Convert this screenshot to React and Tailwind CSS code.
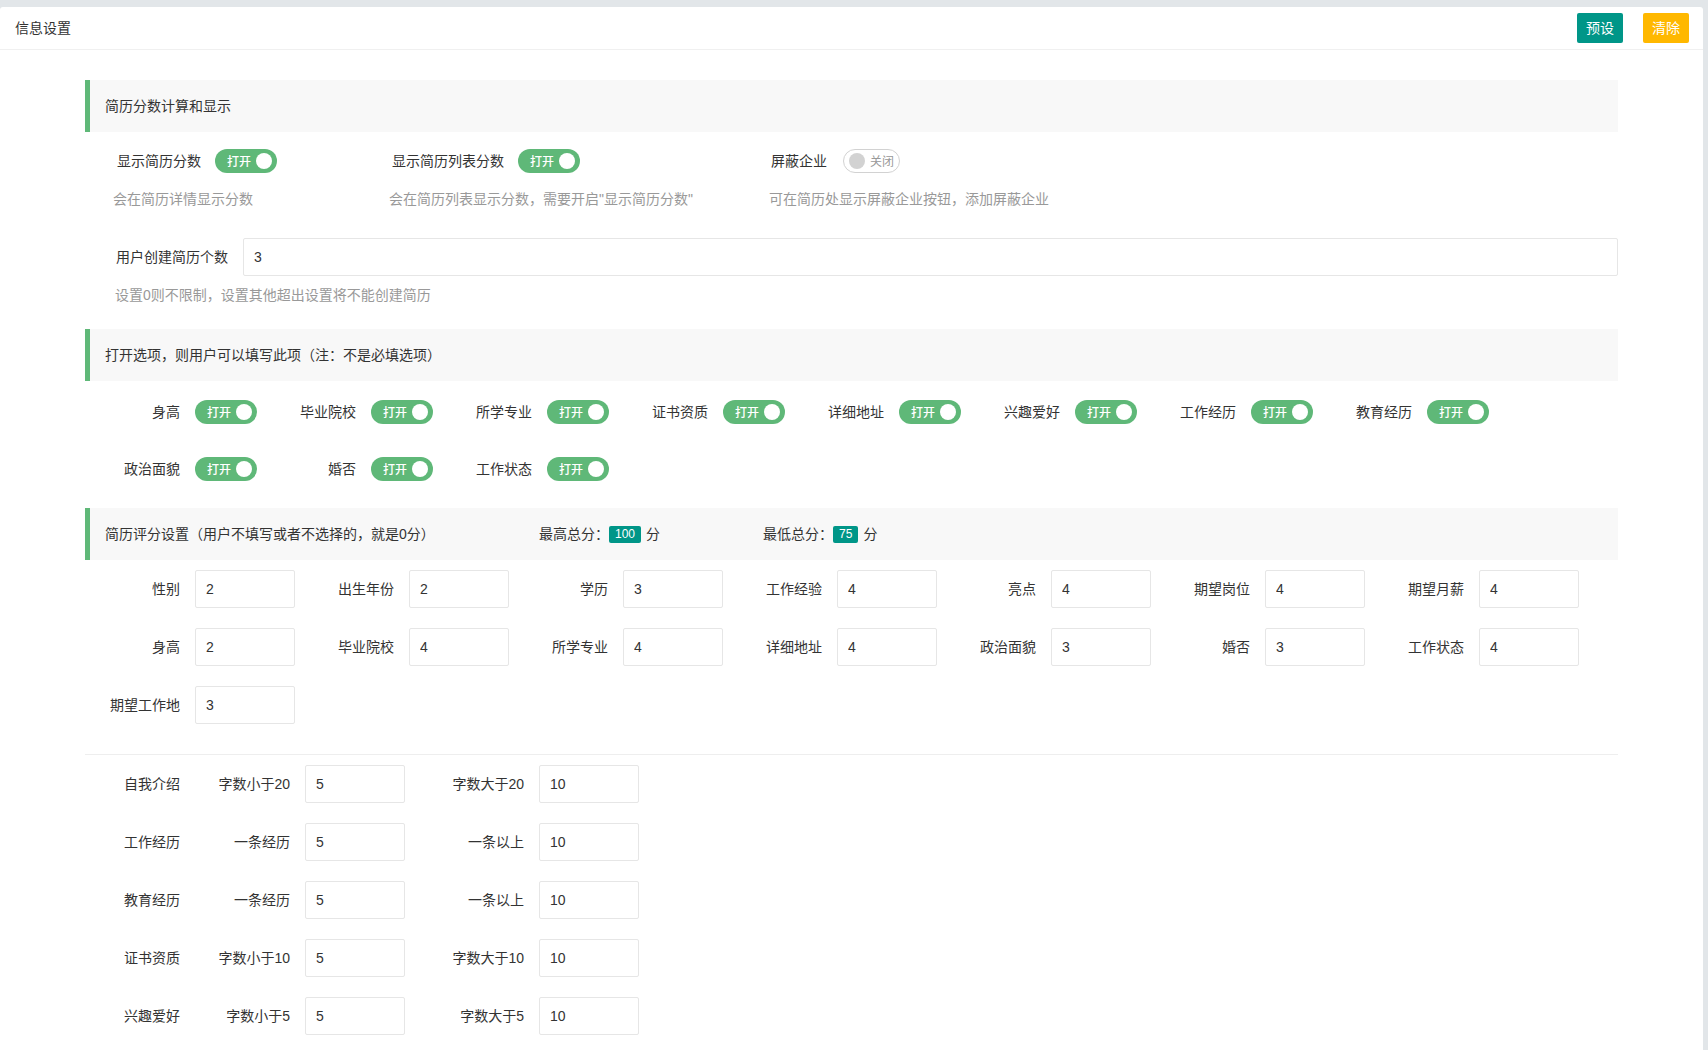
import React from 'react';

function Toggle({ on = true }) {
  if (on) {
    return (
      <span className="relative block h-[24px] w-[62px] shrink-0 rounded-full bg-[#5FB878] pl-[12px] text-[12px] font-medium leading-[26px] text-white">
        打开
        <span className="absolute right-[5px] top-[4px] h-[16px] w-[16px] rounded-full bg-white" />
      </span>
    );
  }
  return (
    <span className="relative box-border block h-[24px] w-[57px] shrink-0 rounded-full border border-[#d2d2d2] bg-white pl-[26px] text-[12px] leading-[24px] text-[#999]">
      关闭
      <span className="absolute left-[5px] top-[3px] h-[16px] w-[16px] rounded-full bg-[#d2d2d2]" />
    </span>
  );
}

function Quote({ children, className = '' }) {
  return (
    <div className={`flex items-center border-l-[5px] border-[#5FB878] bg-[#f8f8f8] pl-[15px] text-[14px] text-[#333] ${className}`}>
      {children}
    </div>
  );
}

function Field({ value }) {
  return (
    <input
      readOnly
      value={value}
      className="box-border h-[38px] w-[100px] shrink-0 rounded-[2px] border border-[#e6e6e6] bg-white px-[10px] text-[14px] text-[#333] outline-none"
    />
  );
}

function Label({ children }) {
  return <div className="w-[110px] shrink-0 pr-[15px] text-right leading-[38px] text-[#333]">{children}</div>;
}

const toggleRow1 = ['身高', '毕业院校', '所学专业', '证书资质', '详细地址', '兴趣爱好', '工作经历', '教育经历'];
const toggleRow2 = ['政治面貌', '婚否', '工作状态'];

const scoreRow1 = [
  ['性别', '2'],
  ['出生年份', '2'],
  ['学历', '3'],
  ['工作经验', '4'],
  ['亮点', '4'],
  ['期望岗位', '4'],
  ['期望月薪', '4'],
];
const scoreRow2 = [
  ['身高', '2'],
  ['毕业院校', '4'],
  ['所学专业', '4'],
  ['详细地址', '4'],
  ['政治面貌', '3'],
  ['婚否', '3'],
  ['工作状态', '4'],
];
const scoreRow3 = [['期望工作地', '3']];

const extraRows = [
  ['自我介绍', '字数小于20', '5', '字数大于20', '10'],
  ['工作经历', '一条经历', '5', '一条以上', '10'],
  ['教育经历', '一条经历', '5', '一条以上', '10'],
  ['证书资质', '字数小于10', '5', '字数大于10', '10'],
  ['兴趣爱好', '字数小于5', '5', '字数大于5', '10'],
];

function ToggleRow({ items, className = '' }) {
  return (
    <div className={`flex h-[38px] items-center ${className}`}>
      {items.map((t) => (
        <div key={t} className="flex w-[176px] shrink-0 items-center">
          <Label>{t}</Label>
          <Toggle />
        </div>
      ))}
    </div>
  );
}

function ScoreRow({ items, className = '' }) {
  return (
    <div className={`flex items-center ${className}`}>
      {items.map(([l, v]) => (
        <div key={l} className="flex w-[214px] shrink-0 items-center">
          <Label>{l}</Label>
          <Field value={v} />
        </div>
      ))}
    </div>
  );
}

export default function App() {
  return (
    <div className="min-h-screen bg-[#e2e6e9] pr-[5px] pt-[7px] font-['Liberation_Sans','Noto_Sans_CJK_SC',sans-serif] text-[14px] text-[#333]">
      <div className="min-h-[1100px] rounded-t-[3px] bg-white pb-[40px]">
        {/* header */}
        <div className="box-border flex h-[43px] items-center justify-between border-b border-[#f0f0f0] pl-[15px] pr-[14px]">
          <div className="text-[14px] text-[#333]">信息设置</div>
          <div className="flex items-center gap-[20px]">
            <button className="h-[30px] w-[46px] rounded-[2px] bg-[#009688] text-[14px] text-white">预设</button>
            <button className="h-[30px] w-[46px] rounded-[2px] bg-[#FFB800] text-[14px] text-white">清除</button>
          </div>
        </div>

        <div className="px-[85px]">
          {/* Section 1 */}
          <Quote className="mt-[30px] h-[52px]">简历分数计算和显示</Quote>
          <div className="mt-[10px] flex pl-[28px]">
            <div className="w-[276px] shrink-0">
              <div className="flex h-[38px] items-center pl-[4px]">
                <span className="mr-[14px]">显示简历分数</span>
                <Toggle />
              </div>
              <div className="mt-[9px] leading-[20px] text-[#999]">会在简历详情显示分数</div>
            </div>
            <div className="w-[380px] shrink-0">
              <div className="flex h-[38px] items-center pl-[3px]">
                <span className="mr-[14px]">显示简历列表分数</span>
                <Toggle />
              </div>
              <div className="mt-[9px] leading-[20px] text-[#999]">会在简历列表显示分数，需要开启"显示简历分数"</div>
            </div>
            <div className="shrink-0">
              <div className="flex h-[38px] items-center pl-[2px]">
                <span className="mr-[16px]">屏蔽企业</span>
                <Toggle on={false} />
              </div>
              <div className="mt-[9px] leading-[20px] text-[#999]">可在简历处显示屏蔽企业按钮，添加屏蔽企业</div>
            </div>
          </div>

          <div className="mt-[29px] flex items-center pl-[31px]">
            <span className="mr-[15px] shrink-0">用户创建简历个数</span>
            <input
              readOnly
              value="3"
              className="box-border h-[38px] flex-1 rounded-[2px] border border-[#e6e6e6] bg-white px-[10px] text-[14px] text-[#333] outline-none"
            />
          </div>
          <div className="mt-[9px] pl-[30px] leading-[20px] text-[#999]">设置0则不限制，设置其他超出设置将不能创建简历</div>

          {/* Section 2 */}
          <Quote className="mt-[24px] h-[52px]">打开选项，则用户可以填写此项（注：不是必填选项）</Quote>
          <ToggleRow items={toggleRow1} className="mt-[12px]" />
          <ToggleRow items={toggleRow2} className="mt-[19px]" />

          {/* Section 3 */}
          <Quote className="mt-[20px] h-[52px]">
            <span className="w-[434px] shrink-0">简历评分设置（用户不填写或者不选择的，就是0分）</span>
            <span>最高总分：</span>
            <span className="inline-flex h-[17px] items-center rounded-[2px] bg-[#009688] px-[6px] text-[12px] leading-none text-white">100</span>
            <span className="ml-[5px]">分</span>
            <span className="ml-[103px]">最低总分：</span>
            <span className="inline-flex h-[17px] items-center rounded-[2px] bg-[#009688] px-[6px] text-[12px] leading-none text-white">75</span>
            <span className="ml-[5px]">分</span>
          </Quote>
          <ScoreRow items={scoreRow1} className="mt-[10px]" />
          <ScoreRow items={scoreRow2} className="mt-[20px]" />
          <ScoreRow items={scoreRow3} className="mt-[20px]" />

          <div className="mt-[30px] h-px bg-[#eeeeee]" />

          {extraRows.map(([cat, l1, v1, l2, v2], i) => (
            <div key={cat} className={`flex items-center ${i === 0 ? 'mt-[10px]' : 'mt-[20px]'}`}>
              <Label>{cat}</Label>
              <Label>{l1}</Label>
              <Field value={v1} />
              <div className="ml-[24px]">
                <Label>{l2}</Label>
              </div>
              <Field value={v2} />
            </div>
          ))}
        </div>
      </div>
    </div>
  );
}
